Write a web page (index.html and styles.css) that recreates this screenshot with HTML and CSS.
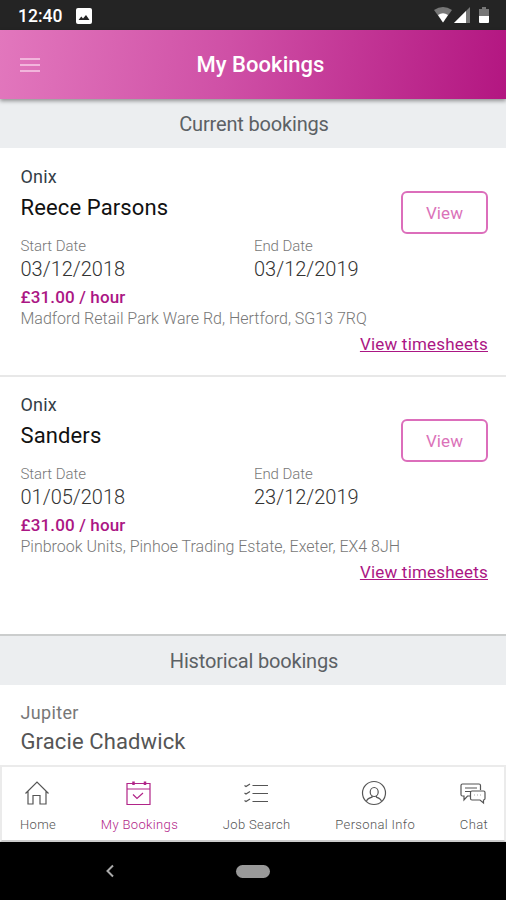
FILE: index.html
```html
<!DOCTYPE html>
<html lang="en">
<head>
<meta charset="utf-8">
<title>My Bookings</title>
<link rel="stylesheet" href="styles.css">
</head>
<body>
<div class="status">
  <span class="clock">12:40</span>
  <svg class="photo" width="16" height="16" viewBox="0 0 16 16"><rect width="16" height="16" rx="2" fill="#fff"/><path d="M2.500 12 5.300 8.500 7 10.500 10 7l3.500 5z" fill="#242424"/></svg>
  <svg class="signals" width="58" height="18" viewBox="0 0 58 18"><path d="M1 4Q10-2 19 4L10 16.500z" fill="#777"/><path d="M5 9Q10 5.500 15 9L10 16.500z" fill="#fff"/><path d="M37 1V17H21z" fill="#777"/><path d="M33 5V17H21z" fill="#fff"/><path d="M46 3h3V1h4v2h3v7H46z" fill="#777"/><path d="M46 10h10v6q0 1-1 1h-8q-1 0-1-1z" fill="#fff"/></svg>
</div>
<header class="header">
  <div class="burger"><i></i><i></i><i></i></div>
  <h1>My Bookings</h1>
</header>
<main class="content">
  <h2 class="section">Current bookings</h2>
  <article class="booking">
    <div class="top"><div><div class="client">Onix</div><div class="name">Reece Parsons</div></div><button class="view">View</button></div>
    <div class="dates"><div><div class="label">Start Date</div><div class="date">03/12/2018</div></div><div><div class="label">End Date</div><div class="date">03/12/2019</div></div></div>
    <div class="rate">£31.00 / hour</div>
    <div class="address">Madford Retail Park Ware Rd, Hertford, SG13 7RQ</div>
    <a class="timesheets">View timesheets</a>
  </article>
  <article class="booking last">
    <div class="top"><div><div class="client">Onix</div><div class="name">Sanders</div></div><button class="view">View</button></div>
    <div class="dates"><div><div class="label">Start Date</div><div class="date">01/05/2018</div></div><div><div class="label">End Date</div><div class="date">23/12/2019</div></div></div>
    <div class="rate">£31.00 / hour</div>
    <div class="address">Pinbrook Units, Pinhoe Trading Estate, Exeter, EX4 8JH</div>
    <a class="timesheets">View timesheets</a>
  </article>
  <h2 class="section historical">Historical bookings</h2>
  <article class="past"><div class="client">Jupiter</div><div class="name">Gracie Chadwick</div></article>
</main>
<nav class="tabs">
  <a><svg width="28" height="28" viewBox="0 0 28 28"><path d="M1.500 14.500 13 3l11.500 11.500M4 12.500V25h5v-8.500h7V25h6V12.500"/></svg><span>Home</span></a>
  <a class="active"><svg width="28" height="28" viewBox="0 0 28 28"><path d="M2 4.500h23v21H2zM2 10h23"/><path d="M8 15.500l4 4 6-5.500"/><path d="M8.500 2.500v3.500M20 2.500v3.500" stroke-width="2.500"/></svg><span>My Bookings</span></a>
  <a><svg width="28" height="28" viewBox="0 0 28 28"><path d="M9.500 6.500H25M9.500 14.500H25M9.500 22.500H25M1.500 6.500l1.500 1L7 5M1.500 14l1.500 1L7 12.500M1.500 21.500l1.500 1L7 20"/></svg><span>Job Search</span></a>
  <a><svg width="28" height="28" viewBox="0 0 28 28"><circle cx="13" cy="14" r="11.500"/><ellipse cx="13.200" cy="13" rx="4" ry="4.500"/><path d="M5.500 22.500c.5-3 3-3.500 5.500-4.300v-1.500M20.500 22.500c-.5-3-2.500-3.500-5-4.300v-1.500"/></svg><span>Personal Info</span></a>
  <a><svg width="28" height="28" viewBox="0 0 28 28"><path d="M10 17H7.500L4 21v-4H2.500Q1 17 1 15.500v-9Q1 5 2.500 5H19q1.500 0 1.500 1.500V11M5 9h12M5 12.500h6"/><path d="M12 12h11.500q1.500 0 1.500 1.500v6q0 1.500-1.500 1.500V24L20 21h-8q-1.500 0-1.500-1.500v-6Q10.500 12 12 12z"/><path d="M14 16h7" stroke-dasharray="1 2" opacity=".5"/></svg><span>Chat</span></a>
</nav>
<div class="system">
  <svg width="10" height="14" viewBox="0 0 10 14"><path d="M8 1.500 2.500 7l5.500 5.500" fill="none" stroke="#aaa" stroke-width="2"/></svg>
  <div class="pill"></div>
</div>
</body>
</html>
```
FILE: styles.css
```css
* { box-sizing: border-box; }
body { margin: 0; width: 506px; height: 900px; overflow: hidden; display: flex; flex-direction: column; background: #fff; font-family: Roboto, "Liberation Sans", sans-serif; }
.status { height: 30px; flex: none; background: #242424; color: #fff; display: flex; align-items: center; padding: 0 15px 0 18px; }
.clock { font-size: 17.5px; font-weight: 500; line-height: 24px; padding-top: 2px; width: 58px; }
.photo { margin-top: 2px; }
.signals { margin-left: auto; }
.header { height: 69px; flex: none; z-index: 1; display: grid; grid-template-columns: 30px 1fr 30px; align-items: center; padding: 0 5px 0 20px; background: linear-gradient(97deg, #e277bd, #cf50a6 45%, #b31681); box-shadow: 0 2px 4px #0006; }
.burger { display: grid; gap: 4px; width: 20px; }
.burger i { height: 2px; background: #f2b5dc; }
h1 { margin: 0; color: #fff; font-size: 22px; line-height: 30px; font-weight: 500; text-align: center; letter-spacing: .05px; }
.content { height: 666px; flex: none; overflow: hidden; }
.section { margin: 0; height: 49px; background: #eceef0; color: #5c6165; font-size: 20px; font-weight: 400; line-height: 50px; text-align: center; letter-spacing: -.17px; padding-left: 2px; }
.historical { height: 51px; border-top: 2px solid #cbcdcd; }
.booking { height: 229px; padding: 17px 18px 0 20.5px; border-bottom: 2px solid #e8e8e8; display: flex; flex-direction: column; }
.last { height: 257px; padding-top: 16px; border: 0; }
.top { display: flex; justify-content: space-between; height: 72px; }
.client { font-size: 18px; line-height: 24px; height: 29px; color: #333d47; letter-spacing: .2px; }
.name { font-size: 22px; line-height: 28px; color: #111; letter-spacing: .12px; }
.view { width: 87px; height: 43px; margin-top: 26px; padding: 0; border: 2px solid #dc6ebb; border-radius: 6px; background: #fff; color: #db72b9; font: 400 17px/36px Roboto, sans-serif; letter-spacing: .1px; }
.dates { display: grid; grid-template-columns: 233.5px 1fr; height: 51px; }
.label { font-size: 15px; line-height: 18px; font-weight: 300; color: #777; letter-spacing: -.08px; }
.date { font-size: 20px; line-height: 24px; margin-top: 2px; font-weight: 300; color: #333; }
.rate { font-size: 17px; line-height: 18px; margin-bottom: 2px; font-weight: 500; color: #ab1684; letter-spacing: .15px; }
.address { font-size: 16px; line-height: 20px; margin-top: 1px; font-weight: 300; color: #777; }
.timesheets { align-self: flex-end; font-size: 17px; line-height: 20px; margin-top: 5px; color: #ab1684; text-decoration: underline; letter-spacing: .2px; }
.past { padding: 16px 20.5px; }
.past .client { color: #777; height: 27px; letter-spacing: .35px; }
.past .name { color: #555; }
.tabs { height: 77px; flex: none; display: flex; justify-content: space-between; padding: 12px 16px 0 18px; border: 2px solid #ebebeb; border-bottom-color: #ccc; background: #fff; color: #555; }
.tabs a { display: flex; flex-direction: column; align-items: center; font-size: 13px; line-height: 18px; font-weight: 300; letter-spacing: .35px; }
.tabs svg { margin-bottom: 9px; fill: none; stroke: currentColor; stroke-width: 1.2; }
.tabs .active { color: #b12488; }
.tabs span { white-space: nowrap; }
.system { flex: none; height: 58px; background: #000; display: grid; grid-template-columns: 131px 34px; align-items: center; padding-left: 105px; }
.pill { width: 34px; height: 13px; border-radius: 7px; background: #999; }
```
